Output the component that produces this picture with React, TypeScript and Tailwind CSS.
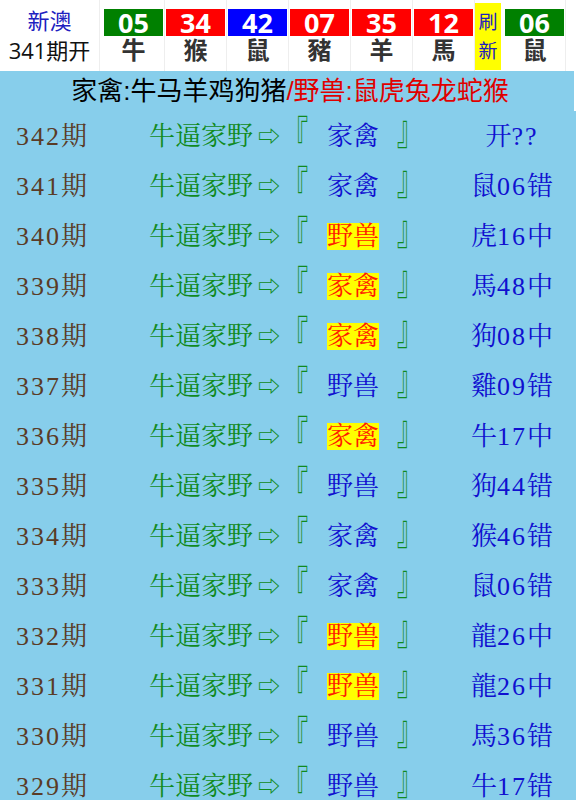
const balls = [
  { n: '05', a: '牛', c: 'bg-[#008000]' },
  { n: '34', a: '猴', c: 'bg-[#ff0000]' },
  { n: '42', a: '鼠', c: 'bg-[#0000ff]' },
  { n: '07', a: '豬', c: 'bg-[#ff0000]' },
  { n: '35', a: '羊', c: 'bg-[#ff0000]' },
  { n: '12', a: '馬', c: 'bg-[#ff0000]' },
]

const rows = [
  { q: '342', g: '家禽', hit: false, r: ['开', '??', ''] },
  { q: '341', g: '家禽', hit: false, r: ['鼠', '06', '错'] },
  { q: '340', g: '野兽', hit: true, r: ['虎', '16', '中'] },
  { q: '339', g: '家禽', hit: true, r: ['馬', '48', '中'] },
  { q: '338', g: '家禽', hit: true, r: ['狗', '08', '中'] },
  { q: '337', g: '野兽', hit: false, r: ['雞', '09', '错'] },
  { q: '336', g: '家禽', hit: true, r: ['牛', '17', '中'] },
  { q: '335', g: '野兽', hit: false, r: ['狗', '44', '错'] },
  { q: '334', g: '家禽', hit: false, r: ['猴', '46', '错'] },
  { q: '333', g: '家禽', hit: false, r: ['鼠', '06', '错'] },
  { q: '332', g: '野兽', hit: true, r: ['龍', '26', '中'] },
  { q: '331', g: '野兽', hit: true, r: ['龍', '26', '中'] },
  { q: '330', g: '野兽', hit: false, r: ['馬', '36', '错'] },
  { q: '329', g: '野兽', hit: false, r: ['牛', '17', '错'] },
]

const sans = "font-['Liberation_Sans','Noto_Sans_CJK_SC',sans-serif]"
const serif = "font-['Liberation_Serif','Noto_Serif_CJK_SC','Noto_Sans_CJK_SC',serif]"

function Ball({ n, a, c }: { n: string; a: string; c: string }) {
  return (
    <div className="flex w-[62px] flex-col border-r border-[#eeeeee] px-[1px] pt-[9px]">
      <div className={`${c} flex h-[27px] items-center justify-center font-['Open_Sans',sans-serif] text-[27px] font-bold leading-[27px] text-white`}>
        {n}
      </div>
      <div className="flex h-[30px] items-center justify-center text-[24px] font-bold leading-[30px] text-[#333333]">
        {a}
      </div>
    </div>
  )
}

export default function App() {
  return (
    <div className={`min-h-[800px] w-[576px] overflow-hidden bg-[#87ceeb] ${sans}`}>
      <div className="flex h-[71px] bg-white">
        <div className="flex w-[100px] flex-col items-center border-r border-[#eeeeee] pt-[7px] text-[22px] leading-[29px]">
          <span className="text-[#2020c0]">新澳</span>
          <span className="font-['Open_Sans','Noto_Sans_CJK_SC',sans-serif] text-[#111111]">341期开</span>
        </div>
        <div className="pl-[3px]" />
        {balls.map((b) => (
          <Ball key={b.n} {...b} />
        ))}
        <div className="mt-[3px] flex h-[67px] w-[26px] flex-col items-center justify-center bg-[#ffff00] text-[19px] leading-[29px] text-[#2020c0]">
          <span>刷</span>
          <span>新</span>
        </div>
        <div className="pl-[3px]" />
        <Ball n="06" a="鼠" c="bg-[#008000]" />
      </div>

      <div className="flex h-[40px] items-center justify-center border-r-2 border-white pl-[6px] text-[26px] text-black">
        家禽:牛马羊鸡狗猪
        <span className="text-[#e00000]">/野兽:鼠虎兔龙蛇猴</span>
      </div>

      <div className={`${serif} text-[26px]`}>
        {rows.map((r) => (
          <div key={r.q} className="flex h-[50px] items-center">
            <div className="w-[149px] pl-[16px] text-[#5a3b26]">
              <span className="tracking-[2px]">{r.q}</span>期
            </div>
            <div className="flex w-[300px] items-center text-[#108a20]">
              牛逼家野<span className="ml-[5px] mr-[2px] text-[22px]">⇨</span>
              <span className="inline-block translate-y-[2px] scale-y-[1.6] font-bold">『</span>
              <span className="ml-[19px] mr-[18px] flex">
                <span className={r.hit ? 'bg-[#ffff00] leading-[27px] text-[#ff1a00]' : 'leading-[27px] text-[#1010d0]'}>
                  {r.g}
                </span>
              </span>
              <span className="inline-block -translate-y-[6px] scale-y-[1.6] font-bold">』</span>
            </div>
            <div className="w-[126px] text-center text-[#1010d0]">
              {r.r[0]}
              <span className="tracking-[2px]">{r.r[1]}</span>
              {r.r[2]}
            </div>
          </div>
        ))}
      </div>
    </div>
  )
}
